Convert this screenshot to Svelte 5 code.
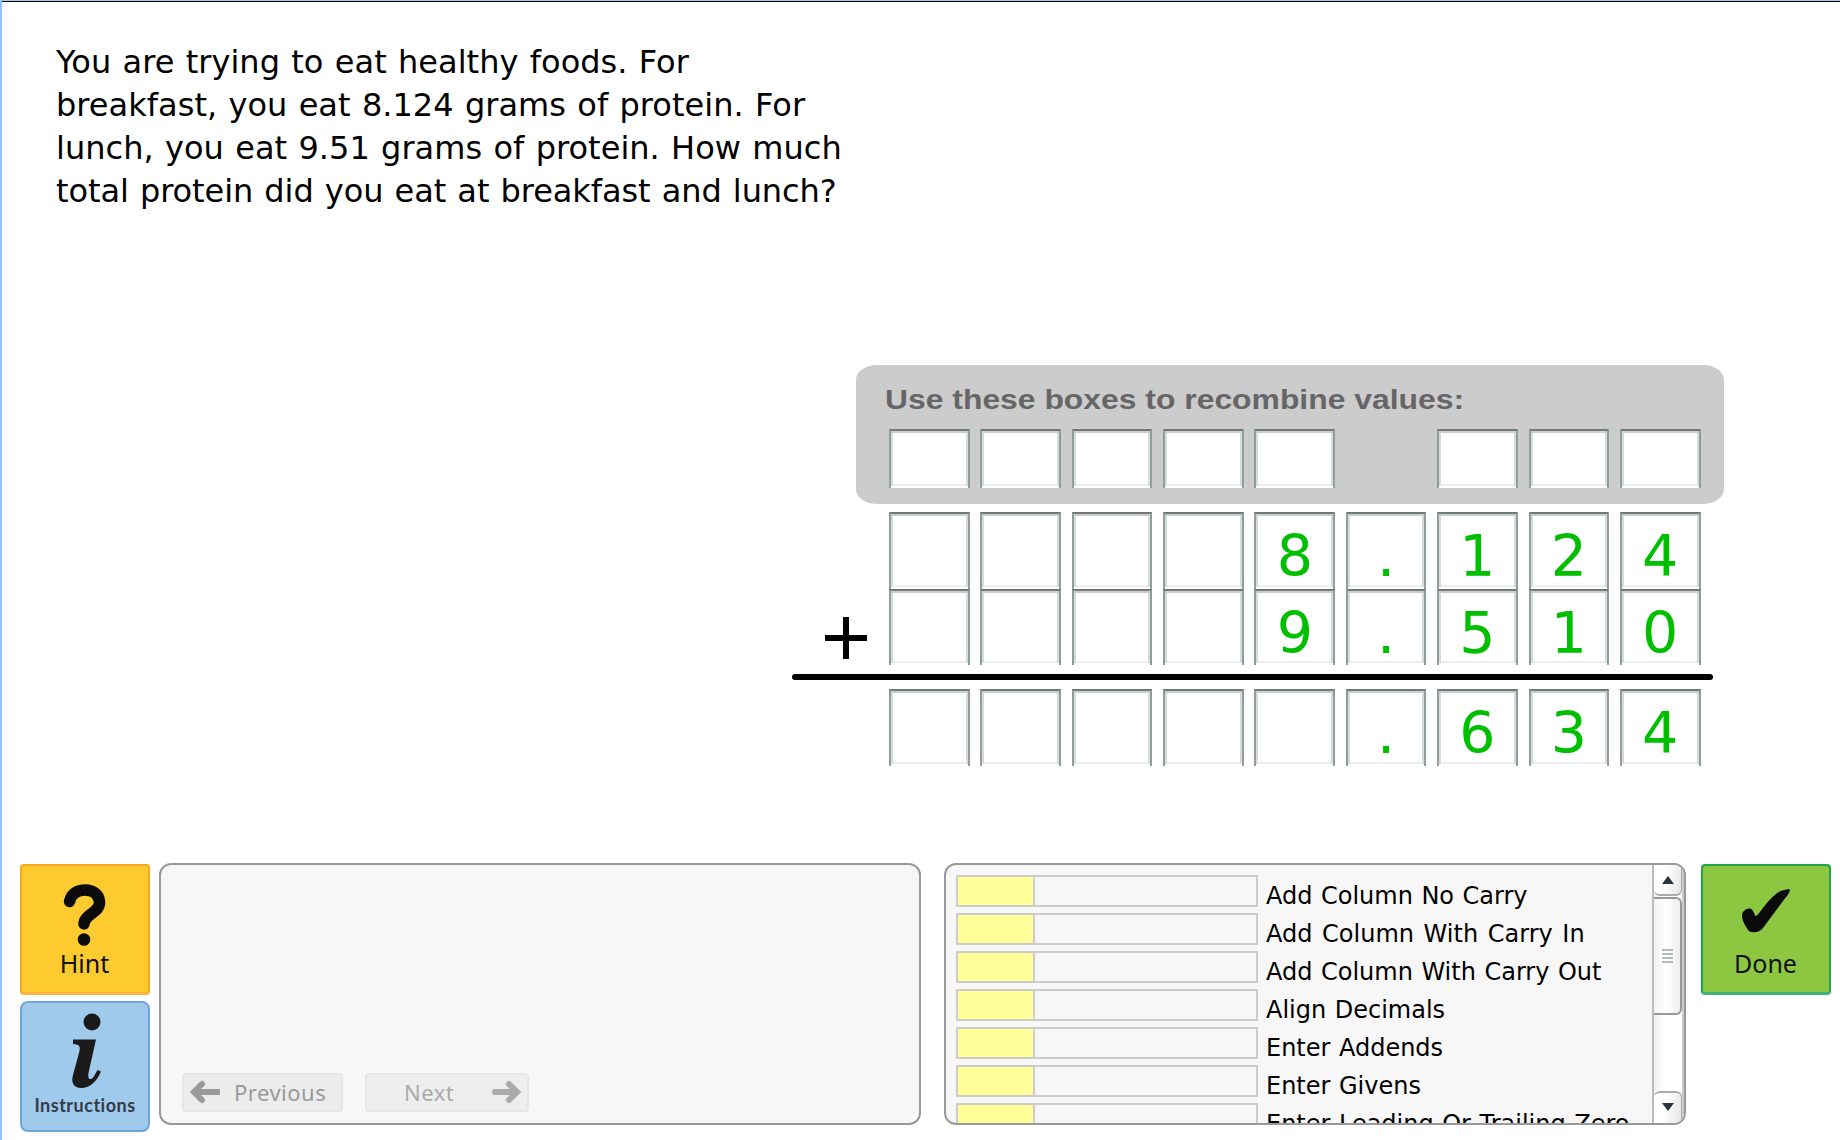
<script>
  const prompt = [
    'You are trying to eat healthy foods. For',
    'breakfast, you eat 8.124 grams of protein. For',
    'lunch, you eat 9.51 grams of protein. How much',
    'total protein did you eat at breakfast and lunch?'
  ];

  const carryBoxes = [1, 1, 1, 1, 1, 0, 1, 1, 1];
  const addends = [
    ['', '', '', '', '8', '.', '1', '2', '4'],
    ['', '', '', '', '9', '.', '5', '1', '0']
  ];
  const sum = ['', '', '', '', '', '.', '6', '3', '4'];

  const skills = [
    { name: 'Add Column No Carry', level: 25 },
    { name: 'Add Column With Carry In', level: 25 },
    { name: 'Add Column With Carry Out', level: 25 },
    { name: 'Align Decimals', level: 25 },
    { name: 'Enter Addends', level: 25 },
    { name: 'Enter Givens', level: 25 },
    { name: 'Enter Leading Or Trailing Zero', level: 25 }
  ];
</script>

<main class="tutor">
  <p class="prompt">
    {#each prompt as line}
      <span>{line}</span>
    {/each}
  </p>

  <section class="work">
    <div class="carry">
      <h2>Use these boxes to recombine values:</h2>
      <div class="row">
        {#each carryBoxes as shown}
          <div class={shown ? 'cell short' : 'blank'}></div>
        {/each}
      </div>
    </div>

    <div class="addends">
      <svg class="plus" viewBox="0 0 42 42"><path d="M21 0V42M0 21H42" /></svg>
      <div class="rows">
        {#each addends as digits}
          <div class="row">
            {#each digits as d}<div class="cell">{d}</div>{/each}
          </div>
        {/each}
      </div>
    </div>
    <div class="rule"></div>
    <div class="row sum">
      {#each sum as d}<div class="cell">{d}</div>{/each}
    </div>
  </section>

  <footer class="dock">
    <div class="side">
      <button class="tile hint">
        <svg viewBox="0 0 130 131">
          <path class="hook" d="M49.5 37.5C51.500 29 58 26 65 26C74 26 79 31 79.500 38C80 49 64.500 50 64 60" />
          <circle cx="64" cy="75.500" r="6.300" />
        </svg>
        <span>Hint</span>
      </button>
      <button class="tile info">
        <svg viewBox="0 0 130 131">
          <circle cx="72" cy="21" r="8.500" />
          <path d="M53 38.500H76L68.500 72C67.500 78 70 80 73.500 76L77.500 69L81 70.500C76 82 69 87 61.500 87C53 87 51 81 53 74L59.500 50C60.500 45 59 43.500 53 43Z" />
        </svg>
        <span>Instructions</span>
      </button>
    </div>

    <div class="panel messages">
      <button class="nav prev">
        <svg viewBox="0 0 30 24"><path d="M28 12H6" /><path d="M12 4L4 12L12 20" /></svg>
        <span>Previous</span>
      </button>
      <button class="nav next">
        <span>Next</span>
        <svg viewBox="0 0 30 24"><path d="M3 12H24" /><path d="M17 4L25 12L17 20" /></svg>
      </button>
    </div>

    <div class="panel skills">
      <div class="list">
        {#each skills as s}
          <div class="skill">
            <div class="bar"><div class="fill" style="width: {s.level}%"></div></div>
            <span>{s.name}</span>
          </div>
        {/each}
      </div>
      <div class="scroll">
        <div class="arrow up"><svg viewBox="0 0 12 8"><path d="M6 0L12 8H0Z" /></svg></div>
        <div class="thumb"><i></i><i></i><i></i><i></i></div>
        <div class="track"></div>
        <div class="arrow down"><svg viewBox="0 0 12 8"><path d="M0 0H12L6 8Z" /></svg></div>
      </div>
    </div>

    <button class="tile done">
      <svg viewBox="0 0 130 131">
        <path d="M41 51C42 45 50 42 52 47L54.500 52C56 52 57 50 59 48C66 38 74 29 80 27C84 25.500 88 25 89 25.500C89 29 85 33 82 37L62 64C59 69 49 69.500 47 66C43 60 41 56 41 51Z" />
      </svg>
      <span>Done</span>
    </button>
  </footer>
</main>

<style>
  :global(body) { margin: 0; background: #fff; overflow: hidden; }
  * { box-sizing: border-box; }
  .tutor {
    display: flex;
    flex-direction: column;
    width: 1840px;
    height: 1140px;
    overflow: hidden;
    background: #fff;
    border-left: 2px solid #90c2fb;
    box-shadow: inset 0 1px #99ccff, inset 0 2px #000;
    font-family: "DejaVu Sans", Verdana, sans-serif;
    color: #000;
  }
  .prompt {
    margin: 0;
    padding: 41px 0 0 54px;
    height: 364.5px;
    font-size: 32px;
    line-height: 43px;
    word-spacing: 1.100px;
    letter-spacing: 0.030px;
  }
  .prompt span { display: block; white-space: nowrap; }
  .prompt span:last-child { letter-spacing: -0.080px; }

  .work { height: 498.500px; }
  .carry {
    width: 868px;
    height: 139px;
    margin-left: 854px;
    padding: 19px 0 0 33px;
    background: #ccc;
    border-radius: 20px / 15px;
  }
  h2 {
    width: max-content;
    margin: 0 0 13.500px -4px;
    font: bold 28px/32px "Liberation Sans", Arial, sans-serif;
    color: #666;
    white-space: nowrap;
    transform: scaleX(1.138);
    transform-origin: left;
  }
  .row { display: grid; grid-template-columns: repeat(9, 80.700px); column-gap: 10.680px; }
  .cell {
    height: 76.500px;
    padding-top: 6px;
    border: 2px solid #929c99;
    border-top-color: #727a78;
    border-bottom: 0;
    background: #fff;
    box-shadow: inset 0 -2px #fff, inset 0 2px #c8d0ce, inset 2px 0 #d5dddb, inset -2px 0 #d5dddb, inset 0 -4px #eee;
    color: #00bf00;
    font-size: 57px;
    line-height: 73px;
    text-align: center;
  }
  .short { height: 58.500px; }
  .addends { display: flex; align-items: flex-start; margin: 8.500px 0 0 823px; height: 152.500px; }
  .plus { width: 42px; height: 42px; margin: 105px 22px 0 0; }
  .plus path { stroke: #000; stroke-width: 6; }
  .rule { width: 921px; height: 5.500px; margin: 9.500px 0 9.500px 789.500px; border-radius: 3px; background: #000; }
  .sum { margin-left: 887px; }

  .dock { display: flex; align-items: flex-start; padding-left: 18px; }
  .side { display: flex; flex-direction: column; gap: 6px; margin-top: 1px; }
  button { padding: 0; margin: 0; font: inherit; }
  .tile {
    display: grid;
    width: 130px;
    height: 131px;
    border-radius: 4px;
    font: 25px/30px "Noto Sans", sans-serif;
    color: #111;
  }
  .tile svg, .tile span { grid-area: 1 / 1; }
  .tile svg { width: 130px; height: 131px; margin: -2px; fill: #0a0a0a; }
  .tile span { align-self: end; justify-self: center; margin: 0 1px 15px 0; }
  .hint { background: #fdca30; border: 2px solid #f8a81f; border-bottom: 3px solid #fab33f; }
  .hint .hook { fill: none; stroke: #0a0a0a; stroke-width: 11.500; stroke-linecap: round; }
  .info { background: #a0caec; border: 2px solid #70a5d8; border-radius: 8px; }
  .info svg { fill: #1a1a1a; }
  .info span { font: bold 18px/22px Lato, sans-serif; letter-spacing: 0.500px; color: #333c46; margin: 0 0 14px 0; }
  .done { background: #8dc641; border: 2px solid #1da64c; border-bottom: 3px solid #3fb377; margin: 1px 0 0 15px; }

  .panel { height: 262px; border: 2px solid #999; border-radius: 12px; background: #f7f7f7; overflow: hidden; }
  .messages { display: flex; align-items: flex-end; width: 762px; margin-left: 9px; padding: 0 0 11.500px 21px; gap: 22px; }
  .nav {
    display: flex;
    align-items: center;
    height: 39px;
    border: 2px solid #e6e6e6;
    border-radius: 4px;
    background: #ececec;
    font: 22px/30px "Noto Sans", sans-serif;
    letter-spacing: 0.500px;
    color: #999;
  }
  .nav svg { width: 30px; height: 24px; fill: none; stroke: currentColor; stroke-width: 6; stroke-linecap: round; }
  .prev { width: 161px; padding-left: 6px; gap: 14px; }
  .next { width: 164px; padding-left: 37px; gap: 38px; background: #eee; color: #aaa; }

  .skills { display: flex; width: 742px; margin-left: 23px; }
  .list { flex: 1; padding: 10px 0 0 10.400px; }
  .skill { display: flex; height: 38px; font-size: 24px; line-height: 38px; word-spacing: 0.900px; }
  .skill:nth-child(2) { word-spacing: 2px; }
  .bar { flex: none; width: 302px; height: 32px; border: 2px solid #ccc; }
  .fill { height: 100%; background: #ffff99; border-right: 2px solid #ccc; box-sizing: content-box; }
  .skill span { padding: 2px 0 0 7.600px; white-space: nowrap; }
  .scroll {
    display: flex;
    flex-direction: column;
    flex: none;
    width: 32px;
    border-left: 2px solid #bbb;
    border-right: 2px solid #ccc;
    background: linear-gradient(90deg, #eee, #fff 35%);
  }
  .arrow {
    display: flex;
    align-items: center;
    justify-content: center;
    height: 31px;
    border: 2px solid #aaa;
    border-width: 0 1px 2px 0;
    border-radius: 0 0 6px 6px;
    background: linear-gradient(100deg, #fff 40%, #e4e4e4);
  }
  .arrow svg { width: 12px; height: 8px; fill: #2b333c; }
  .down { border-width: 2px 1px 0 0; border-radius: 6px 6px 0 0; height: 32px; padding-bottom: 2px; }
  .thumb {
    display: flex;
    flex-direction: column;
    align-items: center;
    justify-content: center;
    gap: 2px;
    height: 118px;
    margin-top: 1px;
    border: 2px solid #999;
    border-left: 0;
    border-radius: 0 6px 6px 0;
    background: linear-gradient(90deg, #f2f2f2, #fff 45%, #eee);
  }
  .thumb i { width: 11px; height: 2px; background: #b3bdbb; }
  .track { flex: 1; }
</style>
